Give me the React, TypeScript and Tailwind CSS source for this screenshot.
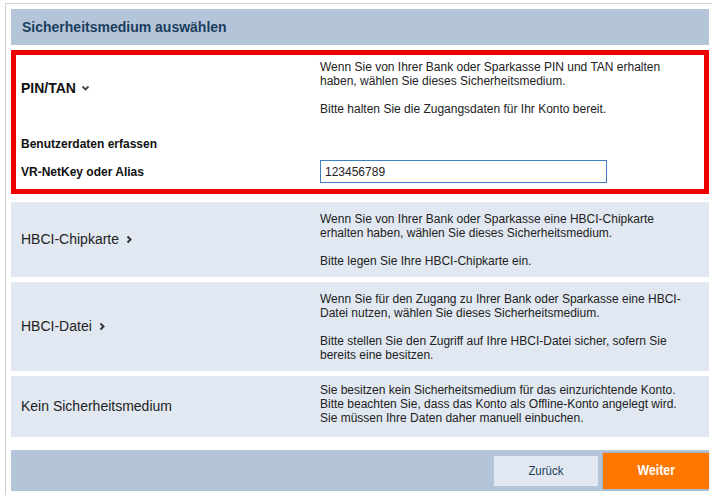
import { ReactNode } from "react";

const font = { fontFamily: '"Liberation Sans", Arial, sans-serif' };

function ChevronRight() {
  return (
    <svg width="8" height="9" viewBox="0 0 8 9" className="ml-[6px] inline-block" aria-hidden="true">
      <path d="M2.5 1.5 L5.5 4.5 L2.5 7.5" fill="none" stroke="#333" strokeWidth="2" />
    </svg>
  );
}

function ChevronDown() {
  return (
    <svg width="9" height="8" viewBox="0 0 9 8" className="ml-[5px] inline-block" aria-hidden="true">
      <path d="M1.5 2.5 L4.5 5.5 L7.5 2.5" fill="none" stroke="#444" strokeWidth="1.8" />
    </svg>
  );
}

interface OptionProps {
  label: string;
  height: string;
  chevron?: boolean;
  children: ReactNode;
  textClass?: string;
}

function Option({ label, height, chevron = true, children, textClass = "" }: OptionProps) {
  return (
    <div className={`grid grid-cols-[299px_1fr] items-center bg-[#e1e8f1] pl-[10px] ${height}`}>
      <div className="flex items-center text-[14px] text-[#222]">
        {label}
        {chevron && <ChevronRight />}
      </div>
      <div className={`text-[12px] leading-[14px] text-[#222] ${textClass}`}>{children}</div>
    </div>
  );
}

export default function App() {
  return (
    <div className="h-[495px] w-[712px] overflow-hidden bg-white" style={font}>
      <div className="ml-[5px] mt-[3px] w-[710px] border border-[#c9d2dc] p-[5px]">
        {/* Header */}
        <div className="flex h-[36px] items-center bg-[#b4c5da] pl-[11px]">
          <h1 className="text-[14px] font-bold text-[#1c3d5c]">Sicherheitsmedium auswählen</h1>
        </div>

        {/* Selected option */}
        <div className="mt-[5px] h-[144px] border-[5px] border-[#ee0000] bg-white pl-[5px] pt-[5px]">
          <div className="grid grid-cols-[299px_1fr] items-center">
            <div className="flex items-center text-[14px] font-bold text-[#111]">
              PIN/TAN
              <ChevronDown />
            </div>
            <div className="text-[12px] leading-[14px] text-[#222]">
              <p>
                Wenn Sie von Ihrer Bank oder Sparkasse PIN und TAN erhalten
                <br />
                haben, wählen Sie dieses Sicherheitsmedium.
              </p>
              <p className="mt-[14px]">Bitte halten Sie die Zugangsdaten für Ihr Konto bereit.</p>
            </div>
          </div>
          <div className="mt-[21px] text-[12px] font-bold leading-[14px] text-[#111]">Benutzerdaten erfassen</div>
          <div className="mt-[9px] grid grid-cols-[299px_1fr] items-center">
            <label className="text-[12px] font-bold text-[#111]">VR-NetKey oder Alias</label>
            <input
              defaultValue="123456789"
              className="h-[23px] w-[287px] border border-[#3f7fbf] bg-white px-[4px] text-[12px] text-[#222] outline-none"
              style={font}
            />
          </div>
        </div>

        {/* Other options */}
        <div className="mt-[8px] flex flex-col gap-[5px]">
          <Option label="HBCI-Chipkarte" height="h-[75px]">
            <p>
              Wenn Sie von Ihrer Bank oder Sparkasse eine HBCI-Chipkarte
              <br />
              erhalten haben, wählen Sie dieses Sicherheitsmedium.
            </p>
            <p className="mt-[14px]">Bitte legen Sie Ihre HBCI-Chipkarte ein.</p>
          </Option>
          <Option label="HBCI-Datei" height="h-[89px]">
            <p>
              Wenn Sie für den Zugang zu Ihrer Bank oder Sparkasse eine HBCI-
              <br />
              Datei nutzen, wählen Sie dieses Sicherheitsmedium.
            </p>
            <p className="mt-[14px]">
              Bitte stellen Sie den Zugriff auf Ihre HBCI-Datei sicher, sofern Sie
              <br />
              bereits eine besitzen.
            </p>
          </Option>
          <Option label="Kein Sicherheitsmedium" height="h-[61px]" chevron={false} textClass="mb-[6px]">
            <p>
              Sie besitzen kein Sicherheitsmedium für das einzurichtende Konto.
              <br />
              Bitte beachten Sie, dass das Konto als Offline-Konto angelegt wird.
              <br />
              Sie müssen Ihre Daten daher manuell einbuchen.
            </p>
          </Option>
        </div>

        {/* Footer */}
        <div className="mt-[13px] flex h-[41px] items-center justify-end gap-[5px] bg-[#b4c5da]">
          <button className="h-[30px] w-[104px] bg-[#e1e8f1] text-[13px] text-[#1c3d5c]">
            <span className="inline-block scale-x-[0.88]">Zurück</span>
          </button>
          <button className="h-[36px] w-[106px] bg-[#ff7700] text-[14px] font-bold text-white shadow-[0_0_2px_rgba(0,0,0,0.25)]">
            <span className="inline-block scale-x-[0.88]">Weiter</span>
          </button>
        </div>
      </div>
    </div>
  );
}
